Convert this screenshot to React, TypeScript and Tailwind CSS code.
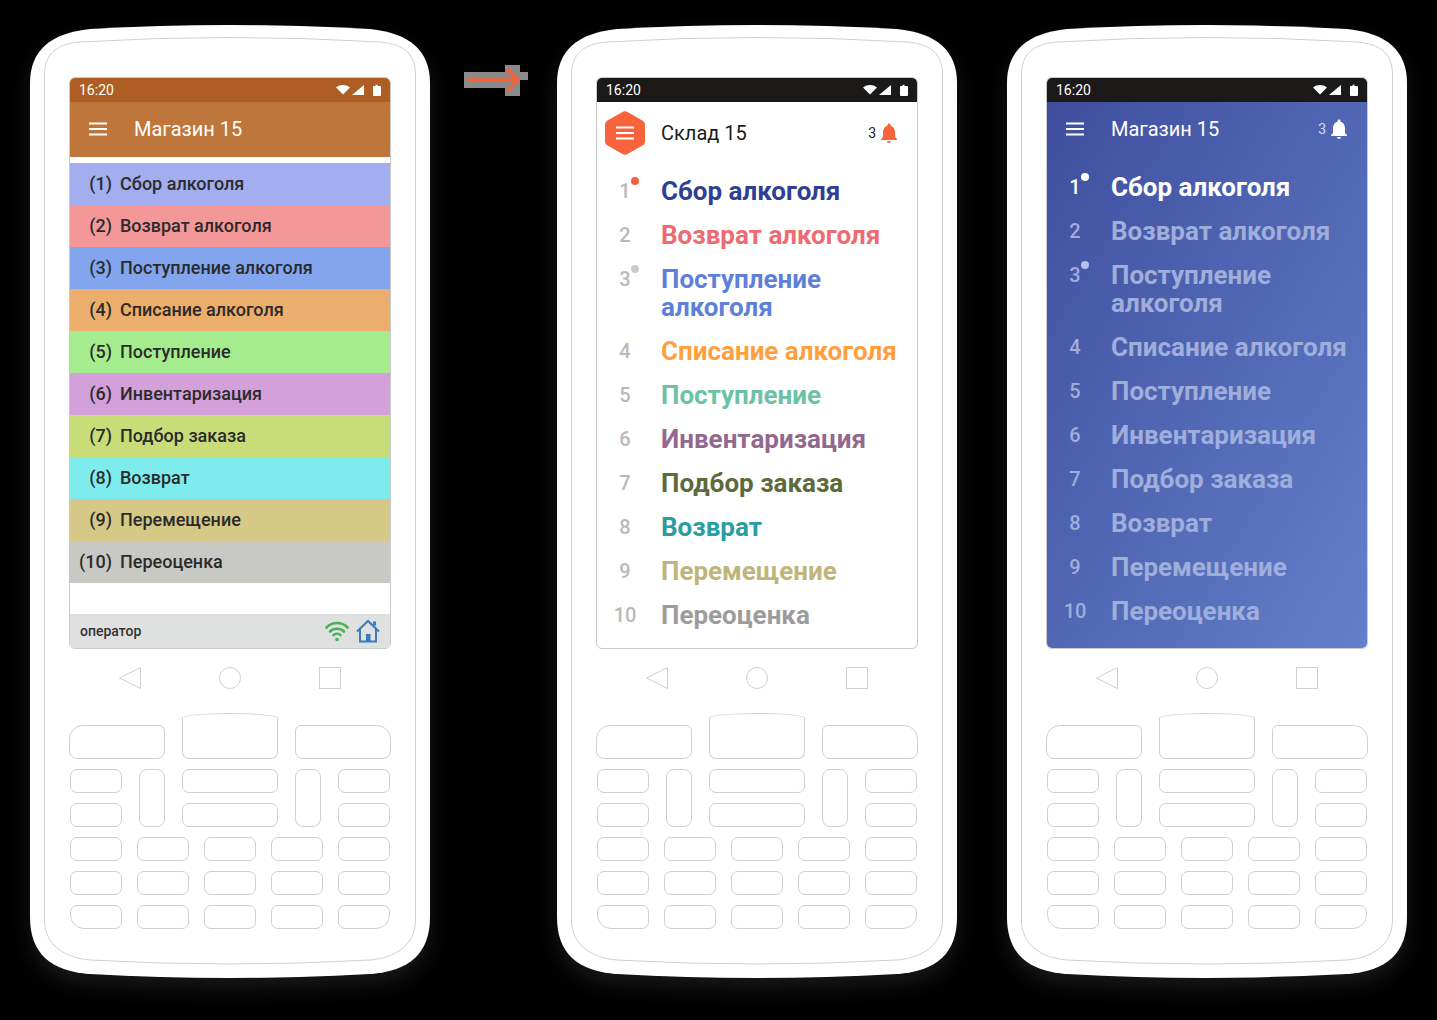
import type { ReactNode } from 'react';
import { MdNotifications } from 'react-icons/md';

const KEY = 'border border-[#cdd0d2] bg-white';

const leftItems = [
  { n: '(1)', label: 'Сбор алкоголя', bg: 'bg-[#a2aef0]' },
  { n: '(2)', label: 'Возврат алкоголя', bg: 'bg-[#f49799]' },
  { n: '(3)', label: 'Поступление алкоголя', bg: 'bg-[#82a5ee]' },
  { n: '(4)', label: 'Списание алкоголя', bg: 'bg-[#ebae6c]' },
  { n: '(5)', label: 'Поступление', bg: 'bg-[#a5ec8e]' },
  { n: '(6)', label: 'Инвентаризация', bg: 'bg-[#d4a0da]' },
  { n: '(7)', label: 'Подбор заказа', bg: 'bg-[#c8dd78]' },
  { n: '(8)', label: 'Возврат', bg: 'bg-[#7eecec]' },
  { n: '(9)', label: 'Перемещение', bg: 'bg-[#d6c886]' },
  { n: '(10)', label: 'Переоценка', bg: 'bg-[#c8c8c4]' },
];

const menuItems = [
  { label: 'Сбор алкоголя', color: 'text-[#2f3f94]' },
  { label: 'Возврат алкоголя', color: 'text-[#ee6b72]' },
  { label: 'Поступление алкоголя', color: 'text-[#5e80d8]' },
  { label: 'Списание алкоголя', color: 'text-[#ff9f40]' },
  { label: 'Поступление', color: 'text-[#6cc2a6]' },
  { label: 'Инвентаризация', color: 'text-[#93688f]' },
  { label: 'Подбор заказа', color: 'text-[#5d6a3c]' },
  { label: 'Возврат', color: 'text-[#2a9da3]' },
  { label: 'Перемещение', color: 'text-[#bfb57a]' },
  { label: 'Переоценка', color: 'text-[#9c9c9c]' },
];

const StatusBar = ({ bg }: { bg: string }) => (
  <div className={`flex h-6 shrink-0 items-center justify-between px-[9px] text-sm text-white ${bg}`}>
    <span>16:20</span>
    <svg width="45" height="12" viewBox="0 0 45 12" fill="white">
      <path d="M0 3.500C2 1.800 4.400 1 7 1s5 .8 7 2.500L7 10.500z" />
      <path d="M16 11L28 1v10z" />
      <path d="M37 3c0-.5.4-1 1-1h1.500V.8h2V2H44c.5 0 1 .5 1 1v8c0 .5-.5 1-1 1h-6c-.6 0-1-.5-1-1z" />
    </svg>
  </div>
);

const Burger = ({ color }: { color: string }) => (
  <svg width="18" height="14" viewBox="0 0 18 14" stroke={color} strokeWidth="2">
    <path d="M0 1.500h18M0 7h18M0 12.500h18" />
  </svg>
);

const Phone = ({ children }: { children: ReactNode }) => (
  <div className="relative h-[954px] w-[400px] shrink-0">
    <svg
      className="absolute inset-0 drop-shadow-[0_10px_10px_#181818]"
      width="400"
      height="954"
      viewBox="0 0 400 954"
      fill="none"
    >
      <path
        d="M0 58C0 26 20 8 60 4Q200-4 340 4C380 8 400 26 400 58V892C400 928 380 946 340 949Q200 957 60 949C20 946 0 928 0 892Z"
        fill="white"
      />
      <path
        d="M14.500 50C14.500 30 25 19 50 17Q200 8 350 17C375 19 385.500 30 385.500 50V895C385.500 920 365 933 340 935Q200 943 60 935C35 933 14.500 920 14.500 895Z"
        stroke="#cdd0d2"
      />
    </svg>
    <div className="relative flex flex-col items-center pt-[52px] font-[Roboto,sans-serif]">
      <div className="flex h-[572px] w-[322px] flex-col overflow-hidden rounded-[6px] border border-[#c8cacb] bg-white">
        {children}
      </div>
      <NavButtons />
      <Keypad />
    </div>
  </div>
);

const NavButtons = () => (
  <div className="mt-[18px] flex h-[22px] items-center gap-[78px]">
    <svg width="22" height="22" viewBox="0 0 22 22" fill="none" stroke="#cdd0d2">
      <path d="M21.500.500V21.500L.500 11z" />
    </svg>
    <div className={`h-[22px] w-[22px] rounded-full ${KEY}`} />
    <div className={`h-[22px] w-[22px] ${KEY}`} />
  </div>
);

const SmallKey = ({ className = 'rounded-[7px]' }: { className?: string }) => (
  <div className={`h-[24px] w-[52px] ${KEY} ${className}`} />
);

const WideKey = () => <div className={`h-[24px] w-[96px] rounded-[7px] ${KEY}`} />;

const TallKey = () => <div className={`h-[58px] w-[26px] rounded-[8px] ${KEY}`} />;

const KeyRow = ({ first = 'rounded-[7px]', last = 'rounded-[7px]' }: { first?: string; last?: string }) => (
  <div className="flex gap-[15px]">
    <SmallKey className={first} />
    <SmallKey />
    <SmallKey />
    <SmallKey />
    <SmallKey className={last} />
  </div>
);

const Keypad = () => (
  <div className="mt-[24px] flex w-[322px] flex-col items-center gap-[10px]">
    <div className="flex w-[322px] items-end gap-[17px]">
      <div className={`h-[34px] w-[96px] rounded-[14px_6px_8px_8px] ${KEY}`} />
      <div className={`h-[46px] w-[96px] rounded-[48px_48px_7px_7px/5px_5px_7px_7px] ${KEY}`} />
      <div className={`h-[34px] w-[96px] rounded-[6px_14px_8px_8px] ${KEY}`} />
    </div>
    <div className="flex items-start gap-[17px]">
      <div className="flex flex-col gap-[10px]">
        <SmallKey />
        <SmallKey />
      </div>
      <TallKey />
      <div className="flex flex-col gap-[10px]">
        <WideKey />
        <WideKey />
      </div>
      <TallKey />
      <div className="flex flex-col gap-[10px]">
        <SmallKey />
        <SmallKey />
      </div>
    </div>
    <KeyRow />
    <KeyRow />
    <KeyRow first="rounded-[7px_7px_7px_14px]" last="rounded-[7px_7px_14px_7px]" />
  </div>
);

const BrownScreen = () => (
  <>
    <StatusBar bg="bg-[#ae5e22]" />
    <div className="flex h-[55px] shrink-0 items-center gap-[27px] bg-[#bf763a] pb-[2px] pl-[19px] text-xl text-white">
      <Burger color="white" />
      <span>Магазин 15</span>
    </div>
    <div className="mt-[6px] flex flex-col">
      {leftItems.map((item) => (
        <div key={item.n} className={`flex h-[42px] items-center gap-2 pb-[2px] text-[18px] font-medium text-[#2b2b2b] ${item.bg}`}>
          <span className="w-[42px] text-right">{item.n}</span>
          <span>{item.label}</span>
        </div>
      ))}
    </div>
    <div className="mt-auto flex h-[34px] shrink-0 items-center justify-between bg-[#dfe0e0] px-[10px]">
      <span className="text-sm font-medium text-[#333]">оператор</span>
      <div className="flex items-center gap-[7px]">
        <svg width="24" height="22" viewBox="0 0 24 22" fill="none" stroke="#4caf5a" strokeWidth="2.600" strokeLinecap="round">
          <path d="M1.500 7.500C7 1.500 17 1.500 22.500 7.500" />
          <path d="M5 11.500C8.500 7.800 15.500 7.800 19 11.500" />
          <path d="M8.500 15.200C10.500 13.200 13.500 13.200 15.500 15.200" />
          <circle cx="12" cy="19.500" r="1.800" fill="#4caf5a" stroke="none" />
        </svg>
        <svg width="24" height="24" viewBox="0 0 24 24" fill="none" stroke="#3b7bb8" strokeWidth="2">
          <path d="M1 12.500L12 2l11 10.500" />
          <path d="M4 10v12.500h16V10" />
          <path d="M18.500 2.500v4" strokeWidth="3" />
          <rect x="10" y="15" width="4.500" height="7" fill="#3b7bb8" stroke="none" />
        </svg>
      </div>
    </div>
  </>
);

const MenuList = ({ dark }: { dark: boolean }) => (
  <div className="flex flex-col gap-4">
    {menuItems.map((item, i) => {
      const active = i === 0;
      const titleColor = dark ? (active ? 'text-white' : 'text-[#a0aedb]') : item.color;
      const numColor = dark ? (active ? 'text-white' : 'text-[#a0aedb]') : 'text-[#b9b9b9]';
      const dotColor = active ? (dark ? 'bg-white' : 'bg-[#f4623a]') : dark ? 'bg-[#b4c1ea]' : 'bg-[#cccccc]';
      return (
        <div key={item.label} className="flex items-start gap-2">
          <div className={`relative h-7 w-14 text-center text-xl/7 font-medium ${numColor}`}>
            {i + 1}
            {i < 3 && i !== 1 && (
              <span className={`absolute left-[34px] top-0 h-2 w-2 rounded-full ${dotColor}`} />
            )}
          </div>
          <div className={`w-[240px] text-[26px]/7 font-bold ${titleColor}`}>{item.label}</div>
        </div>
      );
    })}
  </div>
);

const Bell = ({ color, countColor }: { color: string; countColor: string }) => (
  <div className={`ml-auto mr-4 flex items-center gap-[1px] ${color}`}>
    <span className={`text-sm ${countColor}`}>3</span>
    <MdNotifications size={24} />
  </div>
);

const WhiteScreen = () => (
  <>
    <StatusBar bg="bg-[#1c1a18]" />
    <div className="flex h-[62px] shrink-0 items-center pl-2 text-xl text-[#1c1c1c]">
      <div className="relative flex h-11 w-10 items-center justify-center">
        <svg className="absolute inset-0" width="40" height="44" viewBox="0 0 40 44" fill="#f7633b">
          <path d="M17.500 1a5 5 0 0 1 5 0L37.500 9.500A5 5 0 0 1 40 14V30a5 5 0 0 1-2.500 4.500L22.500 43a5 5 0 0 1-5 0L2.500 34.500A5 5 0 0 1 0 30V14a5 5 0 0 1 2.500-4.500z" />
        </svg>
        <span className="relative">
          <Burger color="white" />
        </span>
      </div>
      <span className="ml-4">Склад 15</span>
      <Bell color="text-[#f7633b]" countColor="text-[#1c1c1c]" />
    </div>
    <div className="pt-[13px]">
      <MenuList dark={false} />
    </div>
  </>
);

const BlueScreen = () => (
  <>
    <StatusBar bg="bg-[#1c1a18]" />
    <div className="flex flex-1 flex-col bg-gradient-to-br from-[#3f4e9e] to-[#6480ca]">
      <div className="flex h-[54px] shrink-0 items-center gap-[27px] pl-[19px] text-xl text-white">
        <Burger color="white" />
        <span>Магазин 15</span>
        <Bell color="text-white" countColor="text-[#d5dcf3]" />
      </div>
      <div className="pt-[17px]">
        <MenuList dark />
      </div>
    </div>
  </>
);

const Arrow = () => (
  <div className="w-[127px] shrink-0 pl-[34px] pt-[39px]">
    <svg width="66" height="34" viewBox="0 0 66 34" fill="#8a8a8a">
      <path d="M0 8h41V1h15v7h8v8h-8v16H41v-8H0z" />
      <path d="M4 16h50M43 5l11 11-11 11" fill="none" stroke="#f4623a" strokeWidth="3.500" />
    </svg>
  </div>
);

export default function App() {
  return (
    <div className="flex h-[1020px] w-[1437px] items-start overflow-hidden bg-black pl-[30px] pt-[25px]">
      <Phone>
        <BrownScreen />
      </Phone>
      <Arrow />
      <Phone>
        <WhiteScreen />
      </Phone>
      <div className="w-[50px] shrink-0" />
      <Phone>
        <BlueScreen />
      </Phone>
    </div>
  );
}
